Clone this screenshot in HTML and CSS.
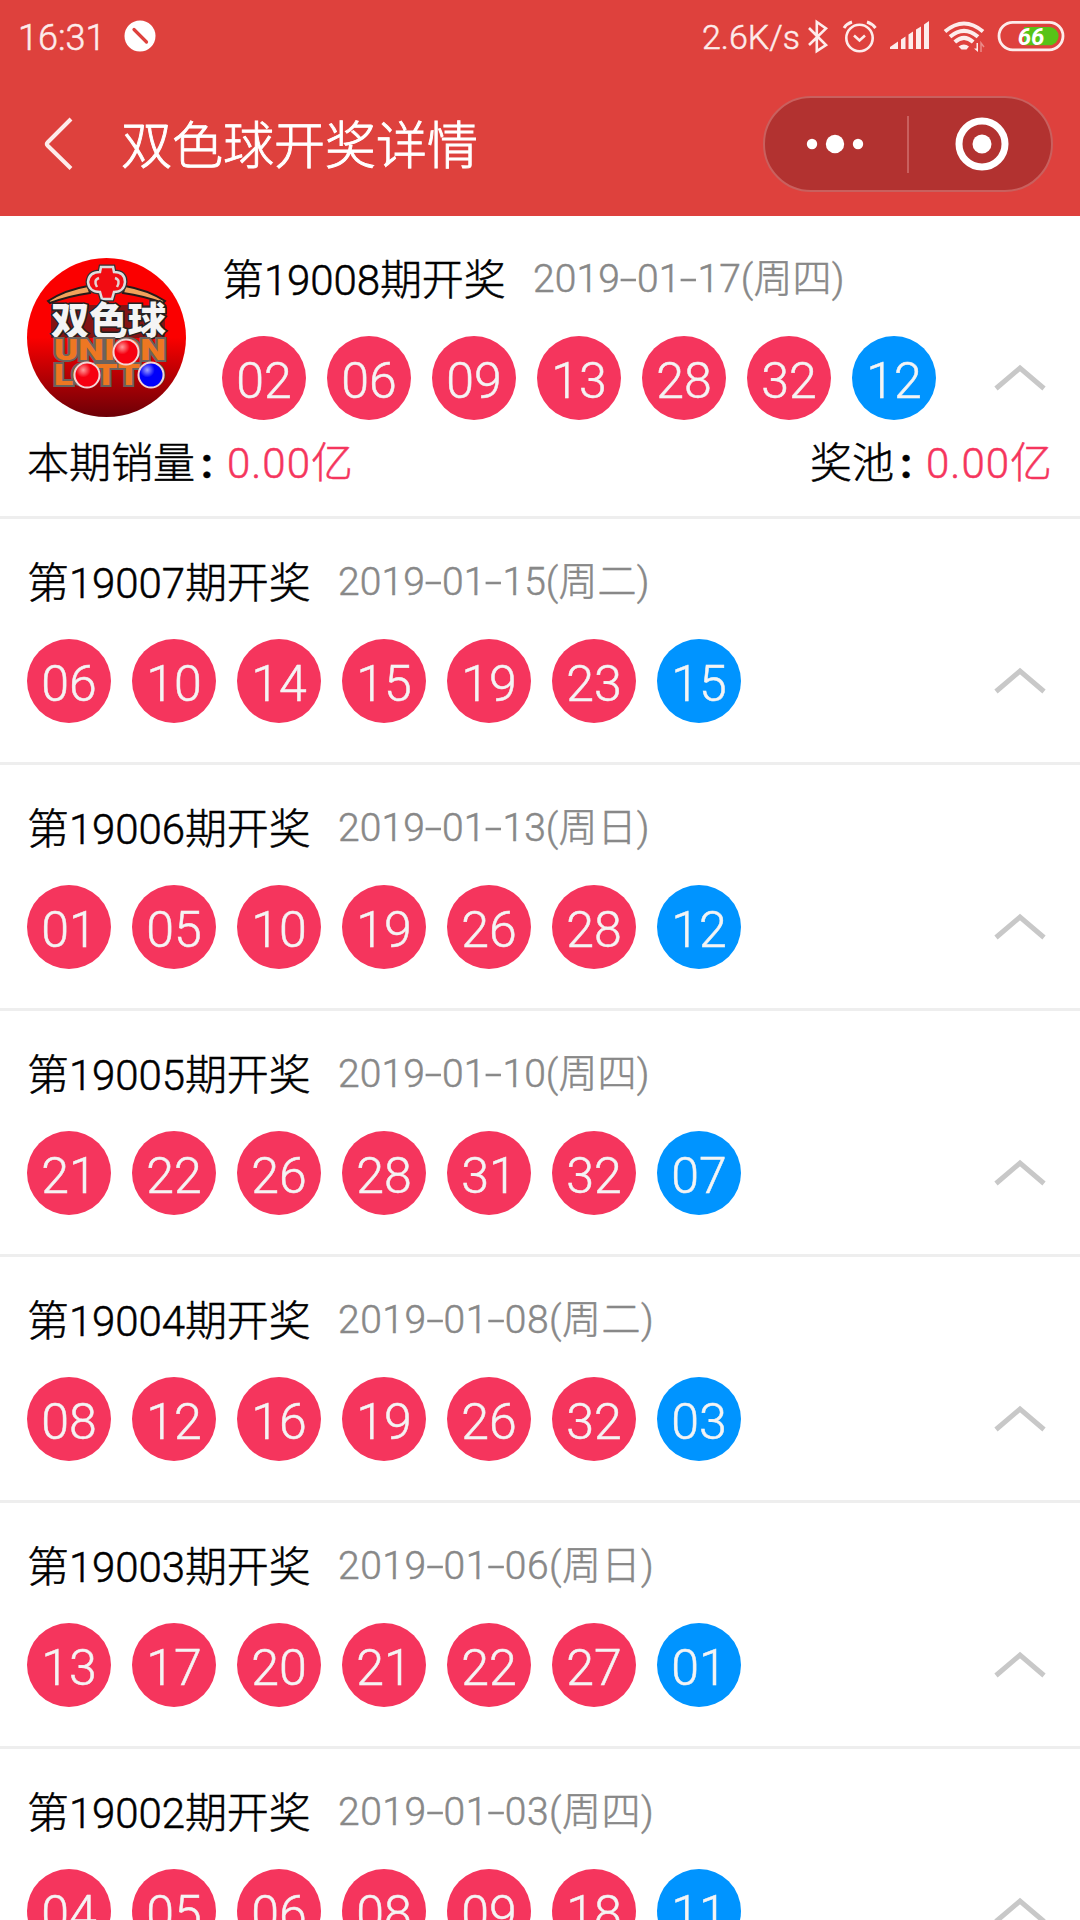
FILE: index.html
```html
<!DOCTYPE html>
<html lang="zh-CN">

<head>
    <meta charset="UTF-8">
    <meta name="viewport" content="width=device-width, initial-scale=1.0">
    <title>双色球开奖详情</title>
    <link rel="stylesheet" href="styles.css">
</head>

<body>
    <header class="header">
        <div class="status-bar">
            <span class="time">16:31</span>
            <svg class="mute" width="32" height="32" viewBox="0 0 32 32">
                <circle cx="16" cy="16" r="15.5" fill="#fff"/>
                <path d="M10 9.5L22.500 22" stroke="#de413d" stroke-width="3.200" stroke-linecap="round"/>
            </svg>
            <span class="speed">2.6K/s</span>
            <!-- bluetooth, alarm, signal, wifi, battery -->
            <svg class="status-icons" width="262" height="40" viewBox="806 16 262 40" fill="none" stroke="#fdeceb">
                <path d="M809 28L826 45L816.800 51V22L826 28.500L809 45" stroke-width="2.600"/>
                <circle cx="859.500" cy="38" r="13.200" stroke-width="2.600"/>
                <path d="M854 35.500L859.500 40.500L865 35.500" stroke-width="2.600"/>
                <path d="M844 28Q847 23.500 852 22M867 22Q872 23.500 875.500 28" stroke-width="3"/>
                <g fill="#fdeceb" stroke="none">
                    <path d="M890 49V47L898 41.500V49zM901 49V39.500L905.500 36.500V49zM908.500 49V34.500L913 31.500V49zM916 49V29.500L921 26.500V49zM924 49V24.500L929 21V49z"/>
                    <path d="M958.500 46.500Q964 42.500 969 46.500L966.500 49.500H961.500z"/>
                    <path d="M978 43V52L974 48.500H976.500V43z"/>
                </g>
                <path d="M945 31.500Q964 15.500 983 31.500M950 36.800Q964 24.800 978 36.800M954.800 42Q964 33.800 973.200 42" stroke-width="4"/>
                <path d="M981 52V43L984 47" stroke="#ea8b88" stroke-width="1.500"/>
                <rect x="999" y="22.300" width="64" height="27.500" rx="13.750" stroke-width="2.800"/>
                <path d="M1024 27H1049.500a9 9 0 0 1 0 18.200H1024z" fill="#57c317" stroke="none"/>
                <text class="battery-text" x="1031" y="45" text-anchor="middle">66</text>
            </svg>
        </div>
        <div class="nav-bar">
            <svg class="back" width="32" height="54" viewBox="0 0 32 54">
                <path d="M28 2L4.500 25.500Q3 27 4.500 28.500L28 51.500" fill="none" stroke="#fdeceb" stroke-width="4"/>
            </svg>
            <h1 class="title">双色球开奖详情</h1>
            <div class="capsule">
                <svg class="more" width="58" height="20" viewBox="0 0 58 20" fill="#fff">
                    <circle cx="6" cy="10" r="5.200"/>
                    <circle cx="29" cy="10" r="9.200"/>
                    <circle cx="52" cy="10" r="5.200"/>
                </svg>
                <span class="divider"></span>
                <svg class="close" width="54" height="54" viewBox="0 0 54 54">
                    <circle cx="27" cy="27" r="23" fill="none" stroke="#fff" stroke-width="7"/>
                    <circle cx="27" cy="27" r="9.500" fill="#fff"/>
                </svg>
            </div>
        </div>
    </header>

    <main class="list">
        <section class="item">
            <div class="latest">
                <svg class="logo" width="159" height="159" viewBox="0 0 159 159">
                    <defs>
                        <linearGradient id="ballRed" x1="0" y1="0" x2="0" y2="1">
                            <stop offset="0" stop-color="#fb0000"/>
                            <stop offset="0.500" stop-color="#fb0000"/>
                            <stop offset="1" stop-color="#6c0007"/>
                        </linearGradient>
                        <radialGradient id="shineRed" cx="0.350" cy="0.300" r="0.500">
                            <stop offset="0" stop-color="#ff9a9a"/>
                            <stop offset="0.600" stop-color="#f60010"/>
                        </radialGradient>
                        <radialGradient id="shineBlue" cx="0.350" cy="0.300" r="0.500">
                            <stop offset="0" stop-color="#a0a0ff"/>
                            <stop offset="0.600" stop-color="#0000fa"/>
                        </radialGradient>
                    </defs>
                    <circle cx="79.500" cy="79.500" r="79.500" fill="url(#ballRed)"/>
                    <path d="M21 43Q38 32 61 28L63 35Q42 38 23 45zM138 43Q121 32 98 28L96 35Q117 38 136 45z" fill="#f2a25b" stroke="#251a18" stroke-width="2"/>
                    <path d="M74 9H86L87 14Q98 14 98 24Q97 34 87 34L85 41H75L73 34Q62 34 61 24Q62 14 73 14z" fill="#f20c12" stroke="#333" stroke-width="5"/>
                    <path d="M74 9H86L87 14Q98 14 98 24Q97 34 87 34L85 41H75L73 34Q62 34 61 24Q62 14 73 14z" fill="#f20c12" stroke="#ddd" stroke-width="2.500"/>
                    <path d="M72 20Q66 22 70 29M88 20Q94 22 90 29" fill="none" stroke="#e5d3d3" stroke-width="2.500"/>
                    <path d="M24 47H138V80H24z" fill="#222" opacity="0.550"/>
                    <text class="logo-cn" x="24" y="76" textLength="115" lengthAdjust="spacingAndGlyphs">双色球</text>
                    <text class="logo-en" x="27" y="102" textLength="112" lengthAdjust="spacingAndGlyphs">UNION</text>
                    <text class="logo-en" x="27" y="127" textLength="110" lengthAdjust="spacingAndGlyphs">LOTTO</text>
                    <g stroke="#f3d6d6" stroke-width="2">
                        <circle cx="99" cy="94" r="12.500" fill="url(#shineRed)"/>
                        <circle cx="60" cy="117" r="12.500" fill="url(#shineRed)"/>
                        <circle cx="124" cy="117" r="12.500" fill="url(#shineBlue)"/>
                    </g>
                </svg>
                <div class="draw">
                    <div class="issue-row"><span class="issue">第19008期开奖</span><span class="date">2019<i>-</i>01<i>-</i>17(周四)</span></div>
                    <div class="ball-row">
                        <span class="ball">02</span><span class="ball">06</span><span class="ball">09</span><span class="ball">13</span><span class="ball">28</span><span class="ball">32</span><span class="ball blue">12</span>
                        <svg class="arrow" width="52" height="28" viewBox="0 0 52 28"><path d="M2 24.500L26 4L50 24.500"/></svg>
                    </div>
                </div>
            </div>
            <div class="money-row">
                <span>本期销量<b>:</b><em>0.00亿</em></span>
                <span>奖池<b>:</b><em>0.00亿</em></span>
            </div>
        </section>

        <section class="item">
            <div class="issue-row"><span class="issue">第19007期开奖</span><span class="date">2019<i>-</i>01<i>-</i>15(周二)</span></div>
            <div class="ball-row">
                <span class="ball">06</span><span class="ball">10</span><span class="ball">14</span><span class="ball">15</span><span class="ball">19</span><span class="ball">23</span><span class="ball blue">15</span>
                <svg class="arrow" width="52" height="28" viewBox="0 0 52 28"><path d="M2 24.500L26 4L50 24.500"/></svg>
            </div>
        </section>

        <section class="item">
            <div class="issue-row"><span class="issue">第19006期开奖</span><span class="date">2019<i>-</i>01<i>-</i>13(周日)</span></div>
            <div class="ball-row">
                <span class="ball">01</span><span class="ball">05</span><span class="ball">10</span><span class="ball">19</span><span class="ball">26</span><span class="ball">28</span><span class="ball blue">12</span>
                <svg class="arrow" width="52" height="28" viewBox="0 0 52 28"><path d="M2 24.500L26 4L50 24.500"/></svg>
            </div>
        </section>

        <section class="item">
            <div class="issue-row"><span class="issue">第19005期开奖</span><span class="date">2019<i>-</i>01<i>-</i>10(周四)</span></div>
            <div class="ball-row">
                <span class="ball">21</span><span class="ball">22</span><span class="ball">26</span><span class="ball">28</span><span class="ball">31</span><span class="ball">32</span><span class="ball blue">07</span>
                <svg class="arrow" width="52" height="28" viewBox="0 0 52 28"><path d="M2 24.500L26 4L50 24.500"/></svg>
            </div>
        </section>

        <section class="item">
            <div class="issue-row"><span class="issue">第19004期开奖</span><span class="date wide">2019<i>-</i>01<i>-</i>08(周二)</span></div>
            <div class="ball-row">
                <span class="ball">08</span><span class="ball">12</span><span class="ball">16</span><span class="ball">19</span><span class="ball">26</span><span class="ball">32</span><span class="ball blue">03</span>
                <svg class="arrow" width="52" height="28" viewBox="0 0 52 28"><path d="M2 24.500L26 4L50 24.500"/></svg>
            </div>
        </section>

        <section class="item">
            <div class="issue-row"><span class="issue">第19003期开奖</span><span class="date wide">2019<i>-</i>01<i>-</i>06(周日)</span></div>
            <div class="ball-row">
                <span class="ball">13</span><span class="ball">17</span><span class="ball">20</span><span class="ball">21</span><span class="ball">22</span><span class="ball">27</span><span class="ball blue">01</span>
                <svg class="arrow" width="52" height="28" viewBox="0 0 52 28"><path d="M2 24.500L26 4L50 24.500"/></svg>
            </div>
        </section>

        <section class="item">
            <div class="issue-row"><span class="issue">第19002期开奖</span><span class="date wide">2019<i>-</i>01<i>-</i>03(周四)</span></div>
            <div class="ball-row">
                <span class="ball">04</span><span class="ball">05</span><span class="ball">06</span><span class="ball">08</span><span class="ball">09</span><span class="ball">18</span><span class="ball blue">11</span>
                <svg class="arrow" width="52" height="28" viewBox="0 0 52 28"><path d="M2 24.500L26 4L50 24.500"/></svg>
            </div>
        </section>
    </main>
</body>

</html>
```

FILE: styles.css
```css
* {
    box-sizing: border-box;
}

body {
    margin: 0;
    height: 1920px;
    overflow: hidden;
    background: #fff;
    color: #000;
    font-family: Roboto, "Noto Sans CJK SC", sans-serif;
    font-weight: 300;
    -webkit-text-stroke: 0.5px;
}

svg {
    display: block;
    flex-shrink: 0;
    -webkit-text-stroke: 0;
}

.header {
    height: 216px;
    background: #de413d;
    color: #fff;
}

.status-bar {
    display: flex;
    align-items: center;
    height: 72px;
    padding-left: 18px;
    color: #fdeceb;
}

.time {
    width: 106px;
    font-size: 36px;
    padding-top: 3px;
}

.speed {
    margin-left: auto;
    font-size: 34px;
    padding-top: 1px;
}

.status-icons {
    margin-left: 6px;
    margin-right: 12px;
}

.battery-text {
    font: italic 700 24px Roboto, sans-serif;
    fill: #fff;
    stroke: none;
}

.nav-bar {
    display: flex;
    align-items: center;
    height: 144px;
    padding: 0 27px 0 43px;
}

.title {
    margin: 0 0 0 46px;
    padding-top: 5px;
    font-size: 51px;
    font-weight: 300;
    line-height: 72px;
    -webkit-text-stroke: 0.9px;
}

.capsule {
    display: flex;
    align-items: center;
    width: 290px;
    height: 96px;
    margin-left: auto;
    padding-left: 41px;
    border: 2px solid #c9605e;
    border-radius: 48px;
    background: #b23230;
}

.divider {
    width: 2px;
    height: 57px;
    margin: 0 46px 0 43px;
    background: #c9605e;
}

.item {
    padding: 33px 27px 39px;
    border-bottom: 3px solid #eee;
}

.item:first-child {
    padding-bottom: 24px;
}

.latest {
    display: flex;
    gap: 36px;
}

.logo {
    margin-top: 9px;
}

.draw {
    flex: 1;
}

.issue-row {
    display: flex;
    height: 60px;
    line-height: 60px;
    white-space: nowrap;
}

.issue {
    width: 311px;
    padding-top: 2px;
    font-size: 42px;
    letter-spacing: -0.1px;
}

.date {
    color: #888;
    font-size: 39px;
    letter-spacing: 0.1px;
}

.wide {
    letter-spacing: 0.5px;
}

.date i {
    display: inline-block;
    width: 17px;
    font-style: normal;
    text-align: center;
    transform: scaleX(1.6);
}

.ball-row {
    display: flex;
    align-items: center;
    gap: 21px;
    margin-top: 27px;
}

.ball {
    width: 84px;
    height: 84px;
    padding-top: 3px;
    border-radius: 50%;
    background: #f5355d;
    color: #f4f4f4;
    font-size: 50px;
    line-height: 84px;
    text-align: center;
}

.blue {
    background: #0094ff;
}

.arrow {
    margin-left: auto;
    margin-right: 7px;
}

.arrow path {
    fill: none;
    stroke: #c8c8c8;
    stroke-width: 5px;
}

.money-row {
    display: flex;
    justify-content: space-between;
    height: 60px;
    margin-top: 14px;
    margin-bottom: -2px;
    font-size: 42px;
    line-height: 60px;
}

.money-row b {
    display: inline-block;
    width: 32px;
    padding-right: 8px;
    font-weight: 700;
    text-align: center;
}

.money-row em {
    color: #f5355d;
    font-style: normal;
    letter-spacing: 1px;
}

.logo-cn {
    font: 900 38px "Noto Sans CJK SC", sans-serif;
    fill: #f4f4f4;
    stroke: #222;
    stroke-width: 3px;
    paint-order: stroke;
}

.logo-en {
    font: 900 29px Roboto, sans-serif;
    fill: #ee7722;
    stroke: #6b625d;
    stroke-width: 4px;
    paint-order: stroke;
}
```
